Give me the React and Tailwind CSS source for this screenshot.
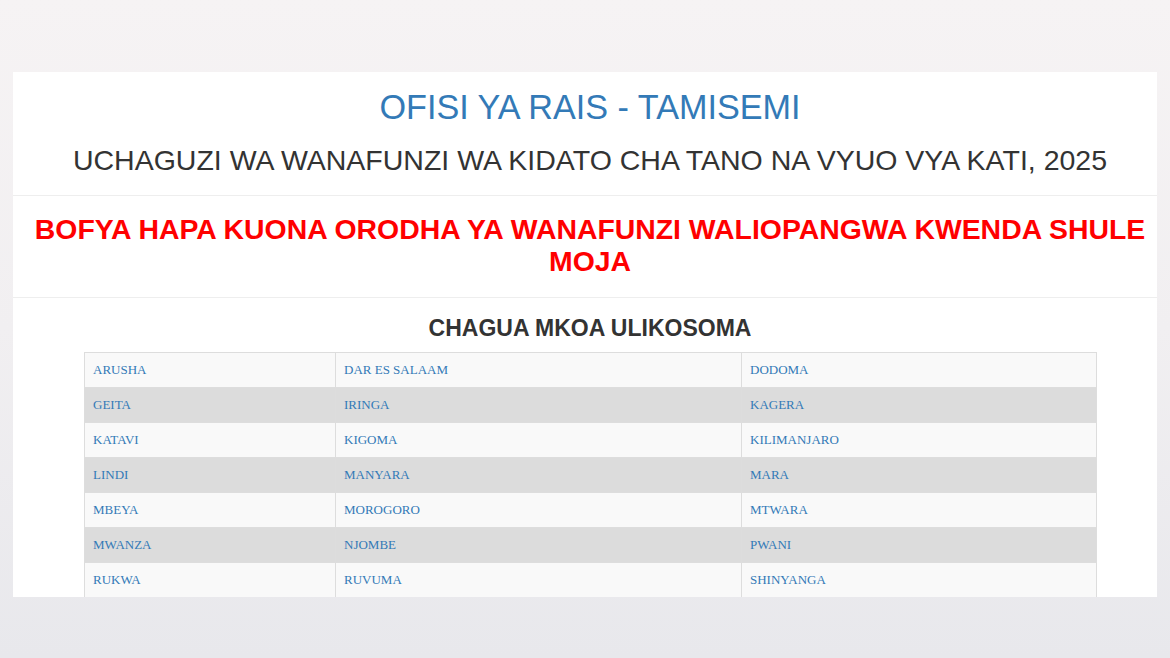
import React from "react";

const rows = [
  ["ARUSHA", "DAR ES SALAAM", "DODOMA"],
  ["GEITA", "IRINGA", "KAGERA"],
  ["KATAVI", "KIGOMA", "KILIMANJARO"],
  ["LINDI", "MANYARA", "MARA"],
  ["MBEYA", "MOROGORO", "MTWARA"],
  ["MWANZA", "NJOMBE", "PWANI"],
  ["RUKWA", "RUVUMA", "SHINYANGA"],
];

export default function App() {
  return (
    <div className="w-[1170px] h-[658px] overflow-hidden bg-gradient-to-b from-[#f6f3f4] via-[#f1eff1] to-[#e8e8ec] pt-[72px] pl-[13px]" style={{ fontFamily: '"Liberation Sans", Arial, sans-serif' }}>
      <div className="w-[1144px] h-[525px] bg-white overflow-hidden flex flex-col">
        <div className="h-[124px] shrink-0 border-b border-[#eeeeee] pt-[17px] pl-[10px] flex flex-col items-center">
          <div className="text-[34.2px] leading-[36px] text-[#337ab7]">OFISI YA RAIS - TAMISEMI</div>
          <div className="mt-[20px] text-[28.5px] leading-[30px] text-[#333333]">
            UCHAGUZI WA WANAFUNZI WA KIDATO CHA TANO NA VYUO VYA KATI, 2025
          </div>
        </div>
        <div className="h-[102px] shrink-0 border-b border-[#eeeeee] pt-[17px] pl-[15px] pr-[5px] text-center">
          <div className="text-[28.4px] leading-[32px] font-bold text-[#ff0000]">
            BOFYA HAPA KUONA ORODHA YA WANAFUNZI WALIOPANGWA KWENDA SHULE MOJA
          </div>
        </div>
        <div className="pt-[17px] flex flex-col">
          <div className="pl-[10px] text-center text-[23px] leading-[26px] font-bold text-[#333333]">CHAGUA MKOA ULIKOSOMA</div>
          <table className="mt-[11px] ml-[71px] w-[1012px] table-fixed border-collapse border border-[#dddddd]" style={{ fontFamily: '"Liberation Serif", "Times New Roman", serif' }}>
            <colgroup>
              <col className="w-[251px]" />
              <col className="w-[406px]" />
              <col className="w-[355px]" />
            </colgroup>
            <tbody>
              {rows.map((r, i) => (
                <tr key={i} className={i % 2 === 0 ? "bg-[#f9f9f9]" : "bg-[#dcdcdc]"}>
                  {r.map((c) => (
                    <td key={c} className="h-[35px] px-[8px] border border-[#dddddd] text-[13px] text-[#337ab7] align-middle">
                      {c}
                    </td>
                  ))}
                </tr>
              ))}
            </tbody>
          </table>
        </div>
      </div>
    </div>
  );
}
